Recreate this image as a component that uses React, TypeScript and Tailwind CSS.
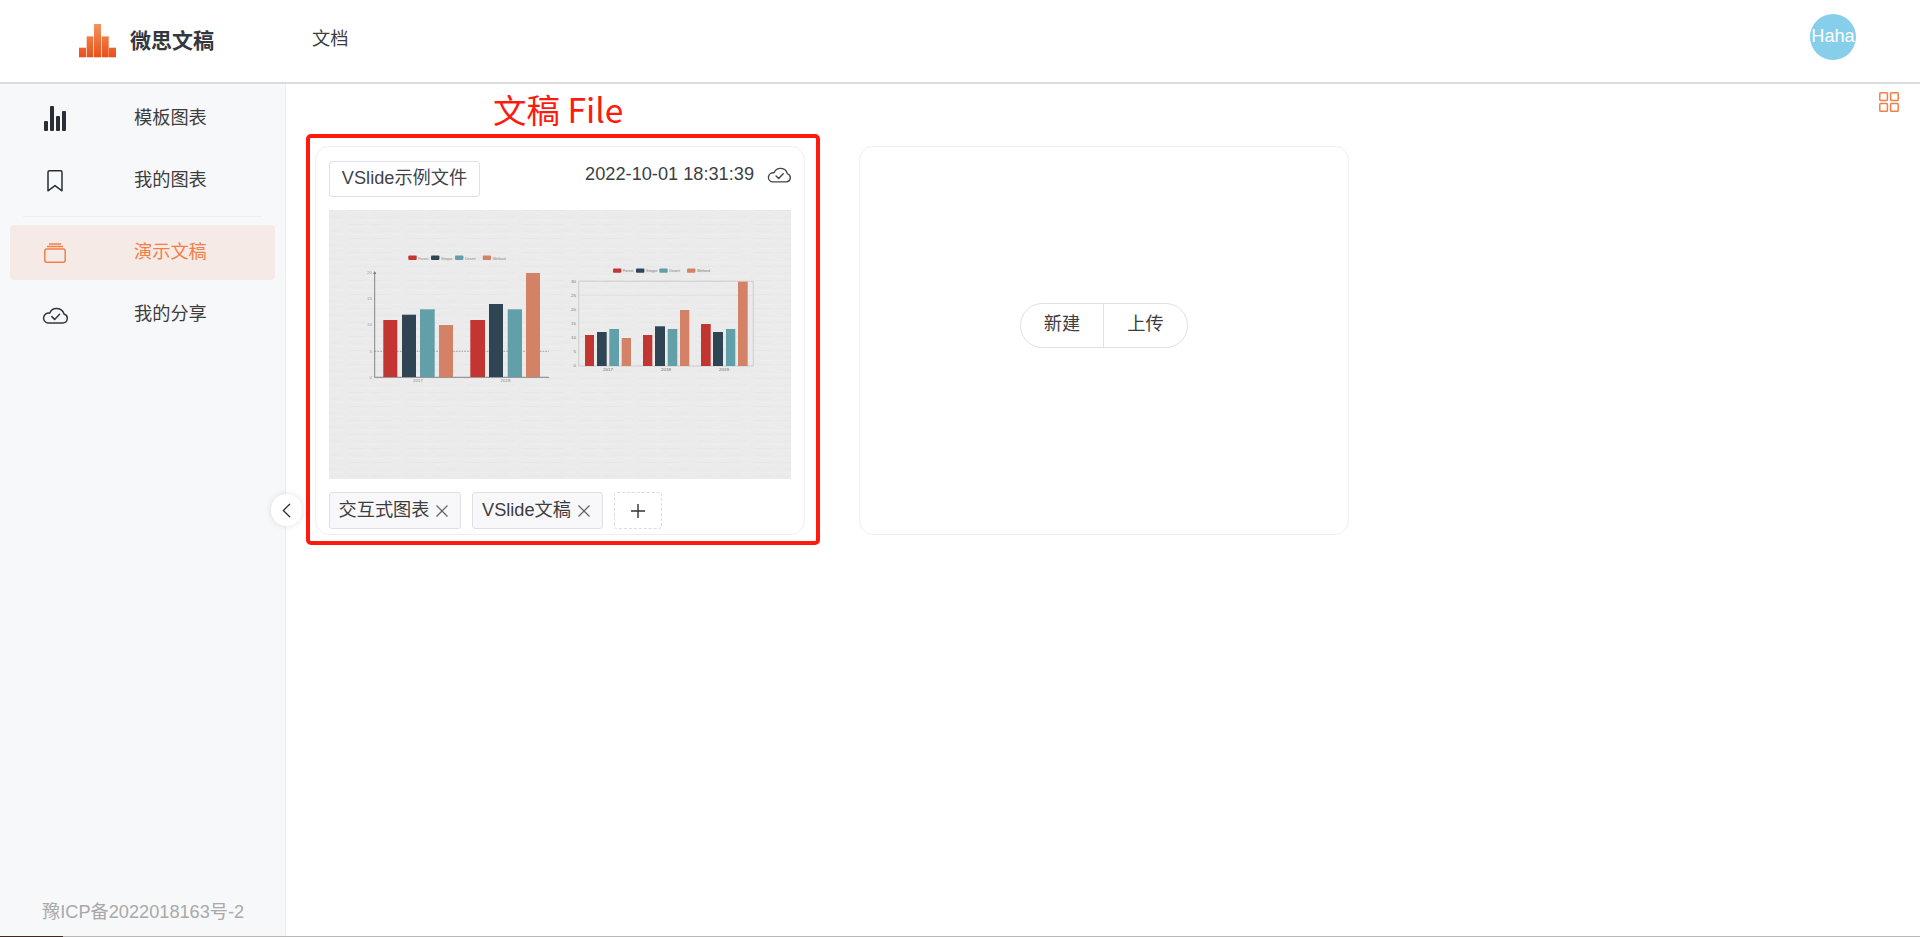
import React from "react";

const CloudCheck = ({ className }: { className?: string }) => (
  <svg viewBox="0 0 26 18" fill="none" stroke="currentColor" strokeWidth="1.5" strokeLinecap="round" strokeLinejoin="round" className={className}>
    <path d="M5.6 17h15.2a4.6 4.6 0 0 0 1.2-9A7.6 7.6 0 0 0 7.6 7.2 5 5 0 0 0 5.6 17z" />
    <path d="M9.8 10.6l2.8 2.8 5-5.2" />
  </svg>
);

const BarsIcon = () => (
  <svg viewBox="0 0 22 25" className="w-[22px] h-[25px]" fill="#2a2f36">
    <rect x="0" y="15" width="4" height="10" rx="1" />
    <rect x="6" y="0" width="4" height="25" rx="1" />
    <rect x="12" y="10" width="4" height="15" rx="1" />
    <rect x="18" y="5" width="4" height="20" rx="1" />
  </svg>
);

const BookmarkIcon = () => (
  <svg viewBox="0 0 16 22" className="w-[16px] h-[22px]" fill="none" stroke="#2a2f36" strokeWidth="1.5" strokeLinejoin="round">
    <path d="M1 2.2a1.4 1.4 0 0 1 1.4-1.4h11.2A1.4 1.4 0 0 1 15 2.2v18.6l-7-5.2-7 5.2z" />
  </svg>
);

const StackIcon = () => (
  <svg viewBox="0 0 22 20" className="w-[22px] h-[20px]" fill="none" stroke="#f27f48" strokeWidth="1.5">
    <rect x="0.8" y="6" width="20.4" height="13.2" rx="2" />
    <path d="M3 3.6h16M5 0.9h12" />
  </svg>
);

const Logo = () => (
  <svg viewBox="0 0 37 34" className="w-[37px] h-[34px]">
    <defs>
      <linearGradient id="lg" x1="0" y1="0" x2="0" y2="33.3" gradientUnits="userSpaceOnUse">
        <stop offset="0" stopColor="#f4955c" />
        <stop offset="1" stopColor="#e8501a" />
      </linearGradient>
    </defs>
    <rect x="0" y="23.7" width="7" height="9.6" fill="url(#lg)" />
    <rect x="7.7" y="12.4" width="6.6" height="20.9" fill="url(#lg)" />
    <rect x="15" y="0" width="7" height="33.3" fill="url(#lg)" />
    <rect x="22.7" y="12.4" width="7" height="20.9" fill="url(#lg)" />
    <rect x="30" y="23.7" width="7" height="9.6" fill="url(#lg)" />
  </svg>
);

const RED = "#c23531";
const NAVY = "#2f4554";
const TEAL = "#61a0a8";
const ORANGE = "#d48265";

const Chart = () => {
  const ox = 329;
  const oy = 210;
  const left = [
    [383.3, 14, 320, RED], [402, 14, 314.7, NAVY], [420, 14.7, 309.3, TEAL], [439, 14, 325, ORANGE],
    [470.3, 14.7, 320, RED], [489, 14, 304, NAVY], [507.7, 14.3, 309.3, TEAL], [526, 14, 273, ORANGE],
  ] as [number, number, number, string][];
  const right = [
    [585, 9, 335, RED], [597, 9.7, 332, NAVY], [609.3, 9.7, 329, TEAL], [621.7, 9.3, 338, ORANGE],
    [643, 9.3, 335, RED], [655, 10, 326.3, NAVY], [667.7, 9.6, 329, TEAL], [680, 9.3, 310, ORANGE],
    [701, 9.7, 324, RED], [713, 10, 332, NAVY], [726, 9.3, 329, TEAL], [738, 9.7, 281.7, ORANGE],
  ] as [number, number, number, string][];
  const legendL = [[408.3, RED, "Forest"], [431, NAVY, "Steppe"], [455, TEAL, "Desert"], [482.7, ORANGE, "Wetland"]] as [number, string, string][];
  const legendR = [[613, RED, "Forest"], [636, NAVY, "Steppe"], [659.3, TEAL, "Desert"], [687, ORANGE, "Wetland"]] as [number, string, string][];
  return (
    <svg viewBox={`${ox} ${oy} 462 269`} className="w-[462px] h-[269px] block" fontFamily="Liberation Sans, sans-serif">
      <defs>
        <pattern id="brick" width="58" height="14" patternUnits="userSpaceOnUse">
          <rect width="58" height="14" fill="#ebebeb" />
          <path d="M0 3h22M30 3h14M6 10.5h30M44 10.5h10" stroke="#eeeeee" strokeWidth="1" />
          <path d="M0 0.5h18M24 0.5h18M30 7h20M2 7h14" stroke="#e7e7e7" strokeWidth="1" />
        </pattern>
      </defs>
      <rect x={ox} y={oy} width="462" height="269" fill="url(#brick)" />

      {legendL.map(([x, c, t]) => (
        <g key={t}>
          <rect x={x} y="255.6" width="8.4" height="4.4" rx="1" fill={c} />
          <text x={x + 10} y="259.6" fontSize="3.6" fill="#888">{t}</text>
        </g>
      ))}
      <path d="M374.7 272V377.3H549" stroke="#777" strokeWidth="0.9" fill="none" />
      <path d="M373.2 274l1.5-3 1.5 3z" fill="#777" />
      <path d="M374.7 351.3H549" stroke="#8a8a8a" strokeWidth="0.8" strokeDasharray="1.6 1.2" />
      {[["20", 273.5], ["15", 300], ["10", 326], ["5", 352.5], ["0", 379]].map(([t, y]) => (
        <text key={t} x="372" y={y} textAnchor="end" fontSize="4.4" fill="#999">{t}</text>
      ))}
      {left.map(([x, w, top, c], i) => (
        <rect key={i} x={x} y={top} width={w} height={377 - top} fill={c} />
      ))}
      <text x="418" y="381.6" textAnchor="middle" fontSize="4.4" fill="#888">2017</text>
      <text x="505.5" y="381.6" textAnchor="middle" fontSize="4.4" fill="#888">2018</text>

      {legendR.map(([x, c, t]) => (
        <g key={t}>
          <rect x={x} y="268.6" width="8.4" height="4.2" rx="1" fill={c} />
          <text x={x + 10} y="272.4" fontSize="3.6" fill="#777">{t}</text>
        </g>
      ))}
      <path d="M578.7 281.3H753.3V366H578.7z" fill="none" stroke="#c8c8c8" strokeWidth="0.9" />
      <path d="M578.7 295.3H753.3" stroke="#dcdcdc" strokeWidth="0.6" />
      {[["30", 282.8], ["25", 296.8], ["20", 310.9], ["15", 325], ["10", 339], ["5", 353.2], ["0", 367.3]].map(([t, y]) => (
        <text key={t} x="576" y={y} textAnchor="end" fontSize="4.4" fill="#777">{t}</text>
      ))}
      {right.map(([x, w, top, c], i) => (
        <rect key={i} x={x} y={top} width={w} height={366 - top} fill={c} />
      ))}
      <text x="608" y="370.6" textAnchor="middle" fontSize="4.4" fill="#666">2017</text>
      <text x="666" y="370.6" textAnchor="middle" fontSize="4.4" fill="#666">2018</text>
      <text x="724" y="370.6" textAnchor="middle" fontSize="4.4" fill="#666">2019</text>
    </svg>
  );
};

const SmallX = () => (
  <svg viewBox="0 0 14 14" className="w-[14px] h-[14px]" fill="none" stroke="#666" strokeWidth="1.3">
    <path d="M1.5 1.5l11 11M12.5 1.5l-11 11" />
  </svg>
);

const NavItem = ({ icon, label, active }: { icon: React.ReactNode; label: string; active?: boolean }) => (
  <div className={`flex items-center h-[55px] pl-[34px] gap-[68px] rounded-[4px] ${active ? "bg-[#f5eae6] text-[#f27f48]" : "text-[#3d3d3d]"}`}>
    <div className="w-[22px] flex justify-center items-center">{icon}</div>
    <span>{label}</span>
  </div>
);

const Tag = ({ label, className }: { label: string; className: string }) => (
  <div className={`h-[37px] flex items-center justify-center gap-[6px] border border-[#dfdfe8] bg-[#f8f8fb] rounded-[3px] text-[#3d3d3d] ${className}`}>
    <span>{label}</span>
    <SmallX />
  </div>
);

export default function App() {
  return (
    <div className="h-screen flex flex-col overflow-hidden bg-white text-[18.2px] font-['Liberation_Sans','Noto_Sans_CJK_SC',sans-serif]">
      <header className="h-[84px] shrink-0 flex items-start border-b-2 border-[#dcdcdc] pl-[79px] pr-[64px]">
        <div className="flex items-center gap-[14px] mt-[24px]">
          <Logo />
          <span className="text-[21px] font-bold text-[#33383f]">微思文稿</span>
        </div>
        <span className="ml-[98px] mt-[26px] text-[#3d3d3d]">文档</span>
        <div className="ml-auto mt-[14px] w-[46px] h-[46px] rounded-full bg-[#87ceeb] flex items-center justify-center text-white overflow-hidden">Haha</div>
      </header>

      <div className="flex flex-1 min-h-0">
        <aside className="w-[286px] shrink-0 bg-[#f7f8fa] border-r border-[#eeeff3] flex flex-col px-[10px] pt-[7px]">
          <div className="flex flex-col gap-[7px]">
            <NavItem icon={<BarsIcon />} label="模板图表" />
            <NavItem icon={<BookmarkIcon />} label="我的图表" />
          </div>
          <div className="h-px bg-[#eeeff2] mx-[13px] mt-[8px] mb-[8px]" />
          <div className="flex flex-col gap-[7px]">
            <NavItem active icon={<StackIcon />} label="演示文稿" />
            <NavItem icon={<CloudCheck className="w-[26px] h-[18px] shrink-0 text-[#33383f]" />} label="我的分享" />
          </div>
          <div className="mt-auto mb-[10px] pl-[32px] text-[#a9a9a9] whitespace-nowrap">豫ICP备2022018163号-2</div>
        </aside>

        <main className="relative flex-1 pl-[29px] pt-[62px]">
          <svg viewBox="0 0 20 20" className="absolute right-[21px] top-[8px] w-[20px] h-[20px]" fill="none" stroke="#f27f48" strokeWidth="1.5">
            <rect x="0.8" y="0.8" width="7.6" height="7.6" rx="0.8" />
            <rect x="11.6" y="0.8" width="7.6" height="7.6" rx="0.8" />
            <rect x="0.8" y="11.6" width="7.6" height="7.6" rx="0.8" />
            <rect x="11.6" y="11.6" width="7.6" height="7.6" rx="0.8" />
          </svg>

          <button className="absolute left-[-15px] top-[410px] w-[31px] h-[32px] rounded-full bg-white shadow-[0_0_6px_rgba(0,0,0,0.12)] flex items-center justify-center">
            <svg viewBox="0 0 10 16" className="w-[9px] h-[15px]" fill="none" stroke="#333" strokeWidth="1.5" strokeLinecap="round" strokeLinejoin="round">
              <path d="M8.5 1L1.5 8l7 7" />
            </svg>
          </button>

          <div className="flex gap-[54px]">
            <div className="relative w-[490px] h-[389px] border border-[#eeeff5] rounded-[14px] px-[13px] pt-[14px] flex flex-col">
              <div className="flex items-center justify-between h-[36px]">
                <div className="h-[36px] w-[151px] border border-[#e0e0e8] rounded-[3px] flex items-center justify-center text-[#3f444b] whitespace-nowrap">VSlide示例文件</div>
                <div className="flex items-center gap-[13px] text-[#3a3f46] -mt-[8px]">
                  <span>2022-10-01 18:31:39</span>
                  <CloudCheck className="w-[24px] h-[17px] text-[#444]" />
                </div>
              </div>
              <div className="mt-[13px]"><Chart /></div>
              <div className="mt-[13px] flex items-center gap-[11px]">
                <Tag label="交互式图表" className="w-[132px] pr-[2px]" />
                <Tag label="VSlide文稿" className="w-[131px] pr-[2px]" />
                <div className="w-[48px] h-[37px] border border-dashed border-[#dcdce4] rounded-[3px] flex items-center justify-center">
                  <svg viewBox="0 0 14 14" className="w-[14px] h-[14px]" fill="none" stroke="#333" strokeWidth="1.4">
                    <path d="M7 0v14M0 7h14" />
                  </svg>
                </div>
              </div>

              <div className="absolute left-[-10px] top-[-13px] w-[514px] h-[411px] border-[4px] border-[#ff1a10] rounded-[5px] pointer-events-none" />
              <div className="absolute left-[177px] top-[-60px] text-[33.5px] leading-[44px] text-[#ff1a10] whitespace-nowrap font-['Noto_Sans_CJK_SC','Noto_Sans',sans-serif]">文稿 File</div>
            </div>

            <div className="w-[490px] h-[389px] pb-[31px] border border-[#eeeff5] rounded-[14px] flex items-center justify-center">
              <div className="flex h-[45px] border border-[#e0e0e6] rounded-full text-[#3d3d3d]">
                <div className="w-[83px] flex items-center justify-center border-r border-[#e0e0e6]">新建</div>
                <div className="w-[83px] flex items-center justify-center">上传</div>
              </div>
            </div>
          </div>
        </main>
      </div>

      <div className="h-px shrink-0 flex">
        <div className="w-[63px] bg-[#3a2a22]" />
        <div className="flex-1 bg-[#b8b8b8]" />
      </div>
    </div>
  );
}
